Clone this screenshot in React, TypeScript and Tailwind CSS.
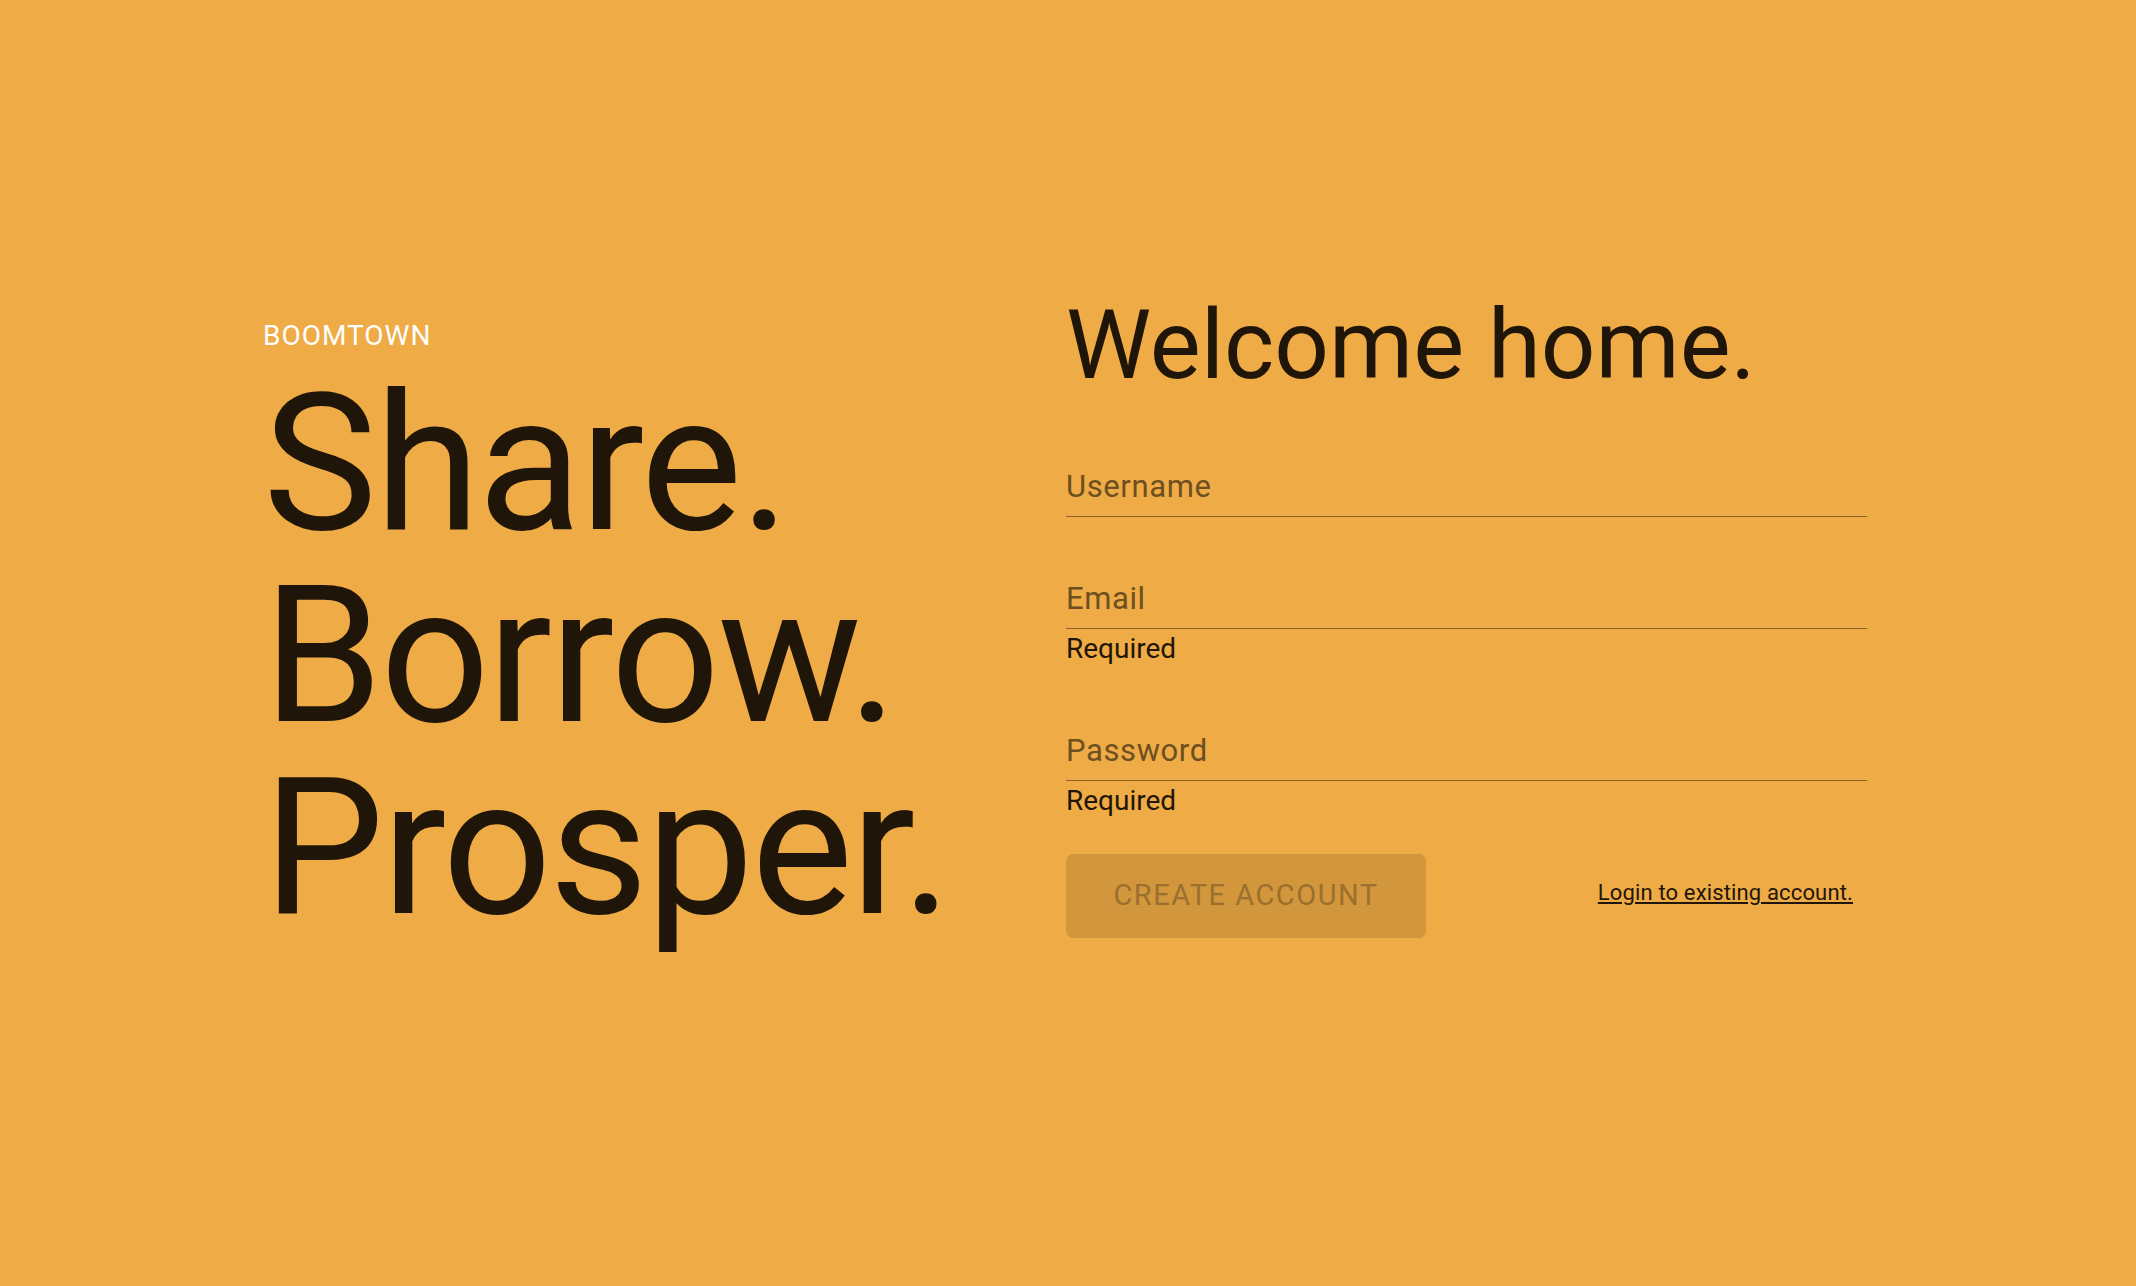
import React from "react";

interface FieldProps {
  label: string;
  helper?: string;
  className?: string;
}

function Field({ label, helper, className }: FieldProps) {
  return (
    <div className={className}>
      <div className="border-b border-[#8b6328] pb-[11px]">
        <span className="block text-[31px] leading-[36px] tracking-[0.6px] text-[#6e4f20]">
          {label}
        </span>
      </div>
      {helper && (
        <p className="mt-[4px] text-[28px] leading-[32px] text-[#1f1609]">
          {helper}
        </p>
      )}
    </div>
  );
}

export default function App() {
  return (
    <div className="min-h-screen w-full bg-[#efab45] font-[Roboto,sans-serif]">
      <div className="flex pl-[263px] pt-[289px]">
        <div className="w-[803px] pt-[31px]">
          <div className="text-[28px] leading-[32px] tracking-[1px] text-white">
            BOOMTOWN
          </div>
          <h1 className="mt-[16px] text-[192px] leading-[192px] tracking-[-2.5px] text-[#1f1609]">
            Share.
            <br />
            Borrow.
            <br />
            Prosper.
          </h1>
        </div>

        <div className="w-[801px]">
          <h2 className="text-[96px] leading-[112px] text-[#1f1609]">
            Welcome home.
          </h2>
          <form className="flex flex-col">
            <Field label="Username" className="mt-[68px]" />
            <Field label="Email" helper="Required" className="mt-[64px]" />
            <Field label="Password" helper="Required" className="mt-[68px]" />
            <div className="mt-[37px] flex items-center justify-between">
              <button
                type="button"
                disabled
                className="h-[84px] w-[360px] rounded-[7px] bg-[#d2963d] text-[29px] tracking-[1.5px] text-[#9b6f2d]"
              >
                CREATE ACCOUNT
              </button>
              <a
                href="#"
                className="mb-[6px] pr-[14px] text-[22px] leading-[26px] tracking-[0.15px] text-[#1f1609] underline"
              >
                Login to existing account.
              </a>
            </div>
          </form>
        </div>
      </div>
    </div>
  );
}
